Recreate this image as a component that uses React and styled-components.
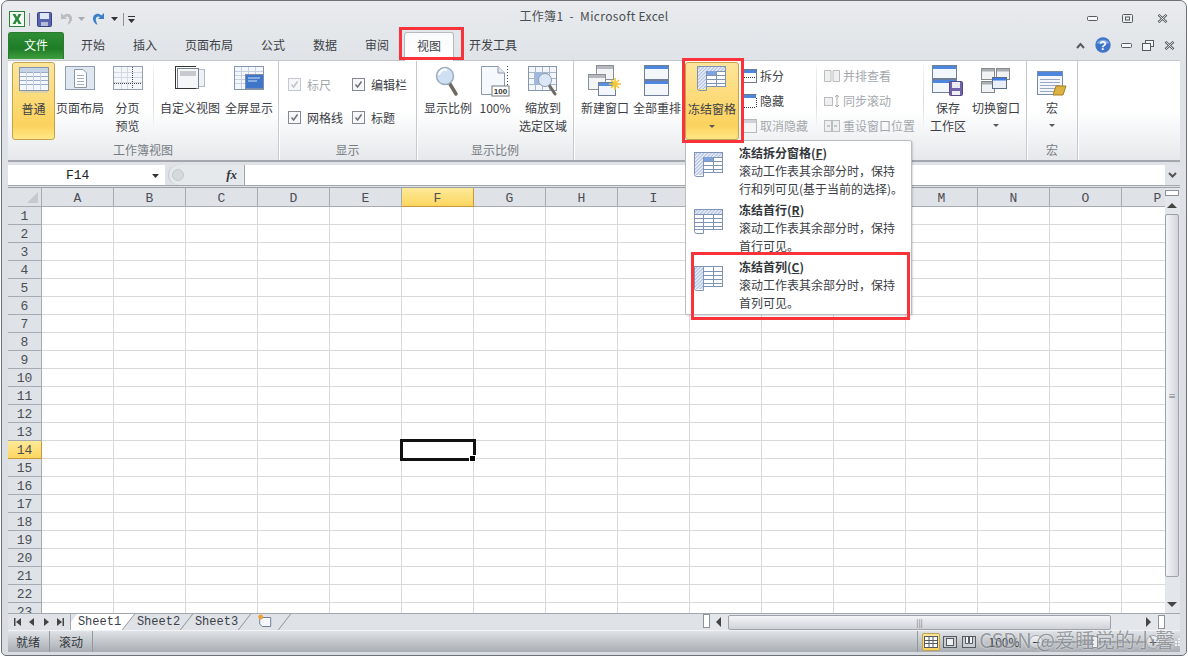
import React from 'react';
import styled, { createGlobalStyle } from 'styled-components';

const GlobalStyle = createGlobalStyle`
    html, body { margin: 0; padding: 0; background: #fff; }
    body { font-family: "Noto Sans CJK SC", "Liberation Sans", sans-serif; font-size: 12px; color: #3c4046; }
`
const Window = styled.div`
    position: relative;
    width: 1186px;
    height: 656px;
    margin-left: 1px;
    box-sizing: border-box;
    display: flex;
    flex-direction: column;
    padding: 0 6px 4px 6px;
    border: 1px solid #6c7278;
    border-radius: 7px 7px 5px 5px;
    background: linear-gradient(#e9ebee 0, #dfe3e7 60px, #d9dde2 100%);
    overflow: hidden;
`
const TitleBar = styled.div`
    height: 31px;
    flex: none;
    display: grid;
    grid-template-columns: 1fr auto 1fr;
    align-items: center;
`
const Qat = styled.div`
    display: flex;
    align-items: center;
    padding: 5px 0 0 1px;
`
const QatGap = styled.span`
    width: ${p => p.$w}px;
    flex: none;
`
const QatSep = styled.span`
    width: 1px;
    height: 13px;
    flex: none;
    background: #8d9298;
`
const TitleText = styled.div`
    font-size: 12px;
    color: #4a4e54;
    white-space: pre;
    letter-spacing: 0.35px;
    margin-top: -3px;
`
const WinControls = styled.div`
    display: flex;
    justify-content: flex-end;
    align-items: center;
    gap: 24px;
    padding: 4px 12px 0 0;
`
const TabRow = styled.div`
    height: 28px;
    flex: none;
    display: flex;
    align-items: flex-start;
`
const FileTab = styled.div`
    width: 56px;
    height: 27px;
    margin-right: 3px;
    border: 1px solid #2c7a2f;
    border-bottom: 0;
    border-radius: 3px 3px 0 0;
    box-sizing: border-box;
    background: linear-gradient(#2f8e35, #1f7c27 60%, #3f9e3f);
    color: #fff;
    text-align: center;
    line-height: 24px;
`
const Tab = styled.div`
    height: 28px;
    box-sizing: border-box;
    padding: 0 14px;
    line-height: 25px;
    color: #3c4046;
    ${p => p.$active && `
        background: linear-gradient(#f9fafb, #ffffff);
        padding: 0 12px;
        margin: 0 1px;
        border: 1px solid #b6babf;
        border-bottom: 0;
        border-radius: 3px 3px 0 0;
        position: relative;
        z-index: 1;
        height: 29px;
    `}
`
const TabRight = styled.div`
    margin-left: auto;
    height: 26px;
    display: flex;
    align-items: center;
    gap: 10px;
    padding: 0 5px 0 0;
`
const Ribbon = styled.div`
    height: 102px;
    flex: none;
    display: flex;
    box-sizing: border-box;
    background: linear-gradient(#ffffff 0, #ffffff 50%, #e6e8eb 100%);
    border-top: 1px solid #c3c7cc;
    border-bottom: 2px solid #a4a8ae;
`
const Group = styled.div`
    width: ${p => p.$w}px;
    flex: none;
    box-sizing: border-box;
    display: flex;
    flex-direction: column;
    border-right: 1px solid #c6cace;
    box-shadow: 1px 0 0 #fff;
`
const GroupBody = styled.div`
    flex: 1;
    display: flex;
    align-items: flex-start;
    gap: ${p => p.$gap || 0}px;
    padding: 1px 0 0 ${p => p.$pad || 0}px;
`
const GroupLabel = styled.div`
    height: 19px;
    flex: none;
    text-align: center;
    line-height: 17px;
    color: #777c83;
`
const LargeButton = styled.div`
    width: ${p => p.$w}px;
    height: 78px;
    flex: none;
    margin-left: ${p => p.$ml || 0}px;
    box-sizing: border-box;
    display: flex;
    flex-direction: column;
    align-items: center;
    text-align: center;
    line-height: 18px;
    white-space: nowrap;
    color: #3c4046;
    ${p => p.$on && `
        border: 1px solid #c2a251;
        border-radius: 3px;
        background: linear-gradient(#fde59a, #fbd25e 82%, #ffe785);
    `}
`
const IconSlot = styled.div`
    height: 37px;
    flex: none;
    padding-top: 3px;
    box-sizing: border-box;
    display: flex;
    justify-content: center;
`
const Caret = styled.span`
    width: 0;
    height: 0;
    margin-top: 7px;
    border: 3px solid transparent;
    border-top: 3px solid #55595f;
    border-bottom: 0;
`
const VSep = styled.span`
    width: 1px;
    height: 62px;
    flex: none;
    margin: ${p => p.$m};
    background: linear-gradient(#f4f5f6, #d7dade 60%, #f4f5f6);
`
const SmallCol = styled.div`
    flex: none;
    display: flex;
    flex-direction: column;
    width: ${p => p.$w}px;
    padding-top: 1px;
`
const SmallRow = styled.div`
    height: 25px;
    display: flex;
    align-items: center;
    gap: 3px;
    white-space: nowrap;
    color: ${p => (p.$dim ? '#a4a8ad' : '#3c4046')};
`
const CheckGrid = styled.div`
    display: grid;
    grid-template-columns: 64px 66px;
    grid-auto-rows: 18px;
    row-gap: 15px;
    padding: 14px 0 0 9px;
`
const CheckItem = styled.div`
    display: flex;
    align-items: center;
    gap: 6px;
    white-space: nowrap;
    color: ${p => (p.$dim ? '#a4a8ad' : '#3c4046')};
`
const CheckBox = styled.span`
    width: 11px;
    height: 11px;
    flex: none;
    border: 1px solid ${p => (p.$dim ? '#c5c8cc' : '#85898f')};
    background: #f6f7f8;
    display: flex;
    align-items: center;
    justify-content: center;
`
const FormulaBar = styled.div`
    height: 20px;
    flex: none;
    margin-top: 3px;
    display: flex;
    background: #dfe3e8;
    border-bottom: 1px solid #a4a8ae;
    box-sizing: content-box;
`
const NameBox = styled.div`
    width: 157px;
    flex: none;
    display: flex;
    align-items: center;
    box-sizing: border-box;
    padding: 1px 6px 0 58px;
    background: #fff;
    font-family: "Liberation Mono", monospace;
    font-size: 13px;
    color: #222;
    justify-content: space-between;
`
const FxZone = styled.div`
    width: 77px;
    flex: none;
    margin-left: 3px;
    position: relative;
    box-sizing: border-box;
    display: flex;
    align-items: center;
    justify-content: flex-end;
    padding-right: 7px;
    background: #e6e9ec;
    border-right: 1px solid #a4a8ae;
    border-left: 1px solid #c3c7cc;
    border-radius: 10px 0 0 10px;
    font-family: "Liberation Serif", serif;
    font-style: italic;
    font-weight: 700;
    font-size: 13px;
    color: #33373c;
`
const FxKnob = styled.span`
    position: absolute;
    left: 3px;
    top: 4px;
    width: 10px;
    height: 10px;
    border-radius: 50%;
    border: 1px solid #c4c8cc;
    background: #d5d8dc;
`
const FormulaInput = styled.div`
    flex: 1;
    background: #fff;
`
const FormulaEnd = styled.div`
    width: 15px;
    flex: none;
    background: #e1e4e8;
    display: flex;
    align-items: center;
    justify-content: center;
`
const SheetArea = styled.div`
    height: 425px;
    flex: none;
    margin-top: 1px;
    display: flex;
    background: #fff;
    border-top: 1px solid #9ca1a7;
`
const CellsClip = styled.div`
    flex: 1;
    overflow: hidden;
`
const CellGrid = styled.div`
    display: grid;
    grid-template-columns: 34px repeat(16, 72px);
    grid-template-rows: 19px;
    grid-auto-rows: 18px;
    width: 1186px;
`
const HeadCell = styled.div`
    box-sizing: border-box;
    display: flex;
    align-items: center;
    justify-content: center;
    padding-top: 2px;
    font-family: "Liberation Mono", monospace;
    font-size: 13px;
    color: #4a4e54;
    background: ${p => (p.$on ? 'linear-gradient(#fde99a, #fdd65f)' : '#dfe2e7')};
    border-right: 1px solid ${p => (p.$on ? '#c9983c' : '#a6abb1')};
    border-bottom: 1px solid ${p => (p.$on ? '#c9983c' : '#a6abb1')};
`
const ColHead = styled(HeadCell)`
    padding-top: 3px;
`
const Corner = styled(HeadCell)`
    align-items: flex-end;
    justify-content: flex-end;
    padding: 0 3px 3px 0;
`
const CornerMark = styled.span`
    width: 0;
    height: 0;
    border-left: 11px solid transparent;
    border-bottom: 11px solid #c6cad0;
`
const Cell = styled.div`
    box-sizing: border-box;
    border-right: 1px solid #d9d9d9;
    border-bottom: 1px solid #d9d9d9;
    position: relative;
    ${p => p.$selected && `
        outline: 3px solid #111;
        outline-offset: -1px;
        z-index: 2;
        &::after {
            content: '';
            position: absolute;
            right: -3px;
            bottom: -4px;
            width: 7px;
            height: 7px;
            background: #000;
            border: 1px solid #fff;
            box-sizing: border-box;
        }
    `}
`
const VScroll = styled.div`
    width: 15px;
    flex: none;
    display: flex;
    flex-direction: column;
    align-items: flex-start;
    background: #e3e6ea;
    box-sizing: border-box;
`
const SplitBox = styled.div`
    width: 14px;
    height: 6px;
    flex: none;
    margin-top: 2px;
    border: 1px solid #8d9298;
    box-sizing: border-box;
    background: #fff;
`
const ArrowUp = styled.span`
    width: 0;
    height: 0;
    flex: none;
    margin: ${p => p.$m};
    border: 5px solid transparent;
    border-top: 0;
    border-bottom: 5px solid #444;
`
const ArrowDown = styled(ArrowUp)`
    border-bottom: 0;
    border-top: 5px solid #444;
`
const VThumb = styled.div`
    width: 14px;
    height: 363px;
    flex: none;
    box-sizing: border-box;
    border: 1px solid #9da2a8;
    border-radius: 2px;
    background: linear-gradient(90deg, #f4f5f7, #d2d6dc);
    display: flex;
    align-items: center;
    justify-content: center;
    color: #6c7076;
    font-size: 8px;
`
const BottomBar = styled.div`
    height: 17px;
    flex: none;
    display: flex;
    background: #dfe3e8;
    border-top: 1px solid #a4a8ae;
    box-sizing: border-box;
`
const NavBox = styled.div`
    width: 63px;
    flex: none;
    display: flex;
    align-items: center;
    justify-content: space-around;
    padding: 0 3px;
    box-sizing: border-box;
    border-right: 1px solid #a4a8ae;
`
const SheetTabs = styled.div`
    display: flex;
    width: 632px;
    flex: none;
    overflow: hidden;
    font-family: "Liberation Mono", monospace;
    font-size: 12px;
`
const SheetTab = styled.div`
    width: ${p => p.$w || 58}px;
    height: 16px;
    flex: none;
    line-height: 16px;
    text-align: center;
    padding-left: ${p => (p.$active ? 0 : 2)}px;
    box-sizing: border-box;
    background: ${p => (p.$active ? '#fff' : 'transparent')};
    color: #3c4046;
    border-right: 1px solid #8d9298;
    transform: skewX(-38deg);
    & > span { display: block; transform: skewX(38deg); }
`
const HThumbZone = styled.div`
    flex: 1;
    display: flex;
    align-items: center;
    background: #e3e6ea;
`
const HThumb = styled.div`
    width: 383px;
    height: 15px;
    flex: none;
    margin-left: 7px;
    box-sizing: border-box;
    border: 1px solid #9da2a8;
    border-radius: 2px;
    background: linear-gradient(#f4f5f7, #cfd3d9);
    display: flex;
    align-items: center;
    justify-content: center;
    font-size: 8px;
    color: #6c7076;
`
const ArrowRight = styled.span`
    width: 0;
    height: 0;
    flex: none;
    margin-left: ${p => p.$ml}px;
    border: 5px solid transparent;
    border-right: 0;
    border-left: 5px solid #444;
`
const ArrowLeft = styled(ArrowRight)`
    border-left: 0;
    border-right: 5px solid #444;
`
const TinySplit = styled.span`
    width: 7px;
    height: 14px;
    margin-left: ${p => p.$ml}px;
    flex: none;
    box-sizing: border-box;
    border: 1px solid #8d9298;
    background: #fff;
`
const StatusBar = styled.div`
    height: 22px;
    flex: none;
    display: flex;
    align-items: center;
    background: linear-gradient(#dfe2e6, #c6cacf 45%, #a9aeb4);
    border-top: 1px solid #f2f3f5;
    box-sizing: border-box;
    color: #33373c;
    position: relative;
`
const StatusCell = styled.div`
    height: 100%;
    padding: 0 9px 0 8px;
    display: flex;
    align-items: center;
    border-right: 1px solid #93989e;
    margin-right: 1px;
`
const StatusRight = styled.div`
    margin-left: auto;
    display: flex;
    align-items: center;
    height: 100%;
    padding-left: 4px;
    border-left: 1px solid #93989e;
`
const ViewBtn = styled.span`
    width: 18px;
    height: 18px;
    margin-right: 1px;
    box-sizing: border-box;
    display: flex;
    align-items: center;
    justify-content: center;
    border-radius: 2px;
    border: 1px solid ${p => (p.$on ? '#c2a251' : 'transparent')};
    background: ${p => (p.$on ? 'linear-gradient(#fde59a, #fbd25e)' : 'transparent')};
`
const ZoomPct = styled.span`
    width: 50px;
    text-align: center;
    font-size: 12px;
`
const ZoomKnob = styled.span`
    width: 14px;
    height: 14px;
    flex: none;
    border-radius: 50%;
    background: linear-gradient(#f3f4f6, #c4c8cd);
    border: 1px solid #a0a4a9;
    box-sizing: border-box;
    display: flex;
    align-items: center;
    justify-content: center;
    font-size: 13px;
    line-height: 12px;
    color: #333;
`
const ZoomRail = styled.span`
    flex: 1;
    height: 2px;
    position: relative;
    background: #9a9ea4;
    &::after {
        content: '';
        position: absolute;
        left: 50%;
        top: -5px;
        width: 6px;
        height: 12px;
        margin-left: -3px;
        background: #eef0f2;
        border: 1px solid #8d9197;
        box-sizing: border-box;
    }
`
const ZoomTrack = styled.div`
    width: 131px;
    flex: none;
    display: flex;
    align-items: center;
    margin-right: 11px;
`
const Grip = styled.svg`
    flex: none;
`
const Watermark = styled.div`
    position: absolute;
    right: 5px;
    bottom: 0;
    font-size: 20px;
    line-height: 24px;
    color: rgba(80, 84, 90, 0.55);
    text-shadow: 0 0 2px rgba(255, 255, 255, 0.8);
    white-space: nowrap;
`
const Menu = styled.div`
    position: absolute;
    left: 683px;
    top: 139px;
    width: 227px;
    height: 175px;
    box-sizing: border-box;
    z-index: 5;
    padding-top: 2px;
    background: #fff;
    border: 1px solid #b9bdc2;
    border-radius: 2px;
    box-shadow: 1px 1px 2px rgba(0, 0, 0, 0.15);
`
const MenuItem = styled.div`
    height: 57px;
    display: flex;
    box-sizing: border-box;
    padding: 1px 0 0 8px;
`
const MenuIcon = styled.div`
    width: 45px;
    padding-top: 8px;
    flex: none;
`
const MenuText = styled.div`
    line-height: 18px;
    color: #3c4046;
    white-space: nowrap;
    & > b { font-weight: 700; color: #33373c; }
    & u { text-underline-offset: 1px; }
`
const RedBox = styled.div`
    position: absolute;
    left: ${p => p.$x}px;
    top: ${p => p.$y}px;
    width: ${p => p.$w}px;
    height: ${p => p.$h}px;
    box-sizing: border-box;
    border: 3px solid #f93339;
    z-index: 6;
    pointer-events: none;
`

/* ---- drawings ---- */
const blue = '#7f93b5';

const SheetIcon = () => (
    <svg width="32" height="27" viewBox="0 0 32 27">
        <rect x="1.5" y="1.5" width="29" height="23" fill="#f3f6fb" stroke="#8595ad" />
        <rect x="2" y="2" width="28" height="4" fill="#c6d2e5" />
        {[6, 10, 14, 18].map(y => <path key={y} d={`M2 ${y + .5}H30`} stroke="#9aabc6" />)}
        {[8, 15, 22].map(x => <path key={x} d={`M${x + .5} 2V24`} stroke="#c4cfe0" />)}
        <path d="M3 26H30" stroke="#c4c8cc" />
    </svg>
);

const PageIcon = () => (
    <svg width="32" height="27" viewBox="0 0 32 27">
        <rect x="1.5" y="1.5" width="29" height="23" fill="#dfe7f1" stroke="#8f9db0" />
        <path d="M10.5 4.5H19L22.5 8V22.5H10.5Z" fill="#fff" stroke="#8a97a8" />
        {[10, 13, 16, 19].map(y => <path key={y} d={`M13 ${y + .5}H20`} stroke="#9fb0c6" />)}
    </svg>
);

const BreakIcon = () => (
    <svg width="32" height="27" viewBox="0 0 32 27">
        <rect x="1.5" y="1.5" width="29" height="23" fill="#f4f6f9" stroke="#95a0af" />
        {[7, 12, 17].map(y => <path key={y} d={`M2 ${y + .5}H30`} stroke="#d3d9e2" />)}
        {[9, 15].map(x => <path key={x} d={`M${x + .5} 2V24`} stroke="#d3d9e2" />)}
        <path d="M20.5 2V24M2 18.5H30" stroke="#444e5e" strokeDasharray="1 1" />
    </svg>
);

const CustomViewIcon = () => (
    <svg width="32" height="27" viewBox="0 0 32 27">
        <rect x="10.5" y="4.5" width="20" height="17" fill="#eef1f5" stroke="#b2b9c3" />
        <rect x="3.5" y="3.5" width="21" height="20" fill="#f5f6f8" stroke="#77818f" />
        <rect x="6" y="6" width="16" height="5" fill="#c6cad0" />
        <path d="M1 1.5H22M1 23.5H22M1.5 1V24" stroke="#333" fill="none" />
    </svg>
);

const FullIcon = () => (
    <svg width="32" height="27" viewBox="0 0 32 27">
        <rect x="1.5" y="1.5" width="29" height="23" fill="#f3f6fb" stroke="#8595ad" />
        {[6, 10, 14, 18].map(y => <path key={y} d={`M2 ${y + .5}H30`} stroke="#c6d0e0" />)}
        {[8, 15, 22].map(x => <path key={x} d={`M${x + .5} 2V24`} stroke="#c6d0e0" />)}
        <rect x="12.5" y="9.5" width="18" height="14" fill="#3f76c9" stroke="#7e8da5" />
        <path d="M15 13H27M15 16H24" stroke="#d5e3f7" />
    </svg>
);

const ZoomIcon = () => (
    <svg width="32" height="32" viewBox="0 0 32 32">
        <path d="M18 19L24 29" stroke="#6e6a60" strokeWidth="3.5" strokeLinecap="round" />
        <circle cx="13" cy="11" r="8.5" fill="#cfe0f2" stroke="#9cadbd" strokeWidth="1.5" />
        <path d="M7 10A6 6 0 0 1 15 5" stroke="#fff" strokeWidth="2" fill="none" />
    </svg>
);

const HundredIcon = () => (
    <svg width="32" height="32" viewBox="0 0 32 32">
        <path d="M2.5 1.5H19L25.5 8V29.5H2.5Z" fill="#f5f8fc" stroke="#8c99aa" />
        <path d="M19 1.5V8H25.5" fill="#dfe6ef" stroke="#8c99aa" />
        <path d="M28.5 1V22" stroke="#444" strokeDasharray="1 2" />
        <rect x="13" y="21" width="17" height="10" fill="#fff" stroke="#70777f" />
        <text x="21.5" y="29" fontSize="8" textAnchor="middle" fontFamily="Liberation Sans" fontWeight="700" fill="#333">100</text>
    </svg>
);

const ZoomSelIcon = () => (
    <svg width="32" height="32" viewBox="0 0 32 32">
        <rect x="1.5" y="1.5" width="28" height="24" fill="#f2f5fa" stroke="#8795a9" />
        <rect x="7" y="7" width="14" height="12" fill="#9db7e6" />
        {[7, 13, 19].map(y => <path key={y} d={`M2 ${y + .5}H29`} stroke="#a9b7ca" />)}
        {[8, 15, 22].map(x => <path key={x} d={`M${x + .5} 2V25`} stroke="#a9b7ca" />)}
        <path d="M22 20L28 29" stroke="#6e6a60" strokeWidth="3" strokeLinecap="round" />
        <circle cx="18" cy="15" r="6.5" fill="#dbe7f6" stroke="#8e9fb1" />
    </svg>
);

const NewWinIcon = () => (
    <svg width="36" height="32" viewBox="0 0 36 32">
        <rect x="9.5" y=".5" width="17" height="14" fill="#f3f4f6" stroke="#8b9097" />
        <rect x="10" y="1" width="16" height="3" fill="#b4b8be" />
        <rect x="1.5" y="9.5" width="17" height="15" fill="#f3f4f6" stroke="#8b9097" />
        <rect x="2" y="10" width="16" height="3" fill="#b4b8be" />
        <rect x="11.5" y="17.5" width="17" height="13" fill="#f3f6fb" stroke="#6f7f97" />
        <rect x="12" y="18" width="16" height="3" fill="#5a8fe0" />
        <path d="M28 13V25M22 19H34M24 15L32 23M32 15L24 23" stroke="#f4c72f" strokeWidth="1.6" />
    </svg>
);

const ArrangeIcon = () => (
    <svg width="26" height="32" viewBox="0 0 26 32">
        <rect x=".5" y=".5" width="24" height="14" fill="#f3f6fb" stroke="#6f7f97" />
        <rect x="1" y="1" width="23" height="3" fill="#4e86dd" />
        <rect x=".5" y="15.5" width="24" height="15" fill="#f3f6fb" stroke="#6f7f97" />
        <rect x="1" y="16" width="23" height="3" fill="#4e86dd" />
    </svg>
);

// the three freeze pictures differ by what is hatched; id varies so menu and ribbon copies don't clash
const FreezeIcon = ({ kind, id }) => (
    <svg width="30" height="26" viewBox="0 0 30 26">
        <defs>
            <pattern id={id} width="2.5" height="2.5" patternUnits="userSpaceOnUse" patternTransform="rotate(45)">
                <rect width="2.5" height="2.5" fill="#e4eaf6" />
                <path d="M0 0V2.5" stroke="#8fa6d6" strokeWidth="1.2" />
            </pattern>
        </defs>
        <rect x=".5" y=".5" width="28" height="20" fill="#fff" stroke={blue} />
        {[5, 9, 13, 17].map(y => <path key={y} d={`M1 ${y + .5}H28`} stroke={blue} />)}
        {[9, 19].map(x => <path key={x} d={`M${x + .5} 1V20`} stroke={blue} />)}
        {kind !== 'col' && <rect x="1" y="1" width="27" height="4" fill={`url(#${id})`} />}
        {kind !== 'row' && <rect x="1" y="1" width="8" height="22" fill={`url(#${id})`} />}
        {kind === 'split' && <rect x="10" y="5" width="9" height="4" fill="#7fa3de" />}
        <path d="M.5 20V22.5Q.5 24.5 3 24.5H9.5V20" fill="none" stroke={blue} />
    </svg>
);

const SaveAreaIcon = () => (
    <svg width="32" height="32" viewBox="0 0 32 32">
        <rect x=".5" y=".5" width="24" height="13" fill="#f3f6fb" stroke="#6f7f97" />
        <rect x="1" y="1" width="23" height="3" fill="#4e86dd" />
        <rect x=".5" y="14.5" width="24" height="13" fill="#f3f6fb" stroke="#6f7f97" />
        <rect x="1" y="15" width="23" height="3" fill="#4e86dd" />
        <rect x="17.5" y="16.5" width="13" height="14" rx="1" fill="#7161a9" stroke="#564a87" />
        <rect x="20" y="17" width="8" height="6" fill="#e9e9ef" />
        <rect x="20" y="26" width="8" height="4" fill="#efeff4" />
    </svg>
);

const SwitchIcon = () => (
    <svg width="30" height="29" viewBox="0 -3 30 29">
        <rect x=".5" y=".5" width="13" height="11" fill="#f1f2f3" stroke="#858a90" />
        <rect x="1" y="1" width="12" height="2.5" fill="#a9adb2" />
        <rect x="15.5" y=".5" width="13" height="11" fill="#f1f2f3" stroke="#858a90" />
        <rect x="16" y="1" width="12" height="2.5" fill="#a9adb2" />
        <rect x=".5" y="13.5" width="13" height="11" fill="#f1f2f3" stroke="#858a90" />
        <rect x="1" y="14" width="12" height="2.5" fill="#a9adb2" />
        <rect x="11.5" y="9.5" width="14" height="11" fill="#e9eff9" stroke="#5a6c88" />
        <rect x="12" y="10" width="13" height="2.5" fill="#3f7be0" />
    </svg>
);

const MacroIcon = () => (
    <svg width="30" height="31" viewBox="0 -4 30 31">
        <rect x=".5" y="2.5" width="25" height="23" fill="#f3f6fb" stroke="#7a8ba6" />
        <rect x="1" y="3" width="24" height="4" fill="#4e86dd" />
        {[10, 13, 16, 19, 22].map(y => <path key={y} d={`M3 ${y + .5}H23`} stroke="#9aa9c0" />)}
        <path d="M19 17H29L26 26H16Z" fill="#dcb341" stroke="#a47f24" />
    </svg>
);

const SplitSmall = () => (
    <svg width="14" height="14" viewBox="0 0 14 14">
        <rect x=".5" y=".5" width="13" height="13" fill="#fff" stroke="#6c7a90" />
        <rect x="1" y="1" width="12" height="3" fill="#4e86dd" />
        <path d="M1 8.5H13" stroke="#333" strokeDasharray="1 1" />
    </svg>
);
const HideSmall = () => (
    <svg width="14" height="14" viewBox="0 0 14 14">
        <path d="M.5 13V.5H13.5" fill="#fff" stroke="#6c7a90" />
        <rect x="1" y="1" width="12" height="3" fill="#4e86dd" />
        <path d="M1 13.5H13M13.5 4V13" stroke="#333" strokeDasharray="1 1" />
    </svg>
);
const UnhideSmall = () => (
    <svg width="14" height="14" viewBox="0 0 14 14">
        <rect x=".5" y=".5" width="13" height="13" fill="#f6f6f6" stroke="#b5b8bc" />
        <rect x="1" y="1" width="12" height="3" fill="#cfd2d6" />
    </svg>
);
const BookSmall = () => (
    <svg width="16" height="14" viewBox="0 0 16 14">
        <path d="M.5 1.5H7V12.5H.5ZM9 1.5H15.5V12.5H9Z" fill="#efefef" stroke="#b9bcc0" />
    </svg>
);
const SyncSmall = () => (
    <svg width="16" height="14" viewBox="0 0 16 14">
        <rect x=".5" y="3.5" width="8" height="8" fill="#efefef" stroke="#b9bcc0" />
        <path d="M13 1V13M11 3L13 1L15 3M11 11L13 13L15 11" stroke="#a8abaf" fill="none" />
    </svg>
);
const ResetSmall = () => (
    <svg width="16" height="14" viewBox="0 0 16 14">
        <rect x=".5" y="1.5" width="7" height="11" fill="#efefef" stroke="#b9bcc0" />
        <rect x="8.5" y="1.5" width="7" height="11" fill="#efefef" stroke="#b9bcc0" />
        <path d="M3 7H6M10 7H13" stroke="#9a9da1" />
    </svg>
);

const ExcelLogo = () => (
    <svg width="16" height="16" viewBox="0 0 16 16">
        <rect x=".5" y=".5" width="15" height="15" fill="#f4f8f2" stroke="#2f7f3a" />
        <path d="M3.5 3H6.5L8 6L9.5 3H12.5L9.6 8L12.5 13H9.5L8 10L6.5 13H3.5L6.4 8Z" fill="#2b8a3b" />
    </svg>
);
const SaveIcon = () => (
    <svg width="15" height="15" viewBox="0 0 15 15">
        <rect x=".5" y=".5" width="14" height="14" rx="1" fill="#5a63ad" stroke="#3b4280" />
        <rect x="3" y="1" width="9" height="6" fill="#dfe6f4" />
        <rect x="4" y="10" width="7" height="4" fill="#b6bbd8" />
    </svg>
);
const UndoIcon = ({ color }) => (
    <svg width="13" height="14" viewBox="0 0 13 14">
        <path d="M1 1V7H7L5 5C7 3.5 10 5 9 9L7.5 13C12 11 13.5 6 10.5 3C8.5 1.2 5.5 1.5 3.6 3.4Z" fill={color} />
    </svg>
);
const RedoIcon = ({ color }) => (
    <svg width="13" height="14" viewBox="0 0 13 14" style={{ transform: 'scaleX(-1)' }}>
        <path d="M1 1V7H7L5 5C7 3.5 10 5 9 9L7.5 13C12 11 13.5 6 10.5 3C8.5 1.2 5.5 1.5 3.6 3.4Z" fill={color} />
    </svg>
);
const TinyCaret = ({ color = '#333' }) => (
    <svg width="7" height="4" viewBox="0 0 7 4"><path d="M0 0H7L3.5 4Z" fill={color} /></svg>
);
const CustomizeIcon = () => (
    <svg width="7" height="7" viewBox="0 0 7 7"><path d="M0 .5H7" stroke="#333" /><path d="M0 3H7L3.5 7Z" fill="#333" /></svg>
);
const MinIcon = () => (
    <svg width="11" height="5" viewBox="0 0 11 5">
        <rect x=".5" y=".5" width="10" height="4" rx="1" fill="#f6f7f8" stroke="#555b62" />
    </svg>
);
const MaxIcon = () => (
    <svg width="11" height="9" viewBox="0 0 11 9">
        <rect x=".5" y=".5" width="10" height="8" rx="1" fill="#eceef0" stroke="#555b62" />
        <rect x="3.5" y="3" width="4" height="3" fill="none" stroke="#555b62" />
    </svg>
);
const CloseIcon = () => (
    <svg width="11" height="9" viewBox="0 0 11 9">
        <path d="M1.5 .8L9.5 8.2M9.5 .8L1.5 8.2" stroke="#555b62" strokeWidth="2.4" />
        <path d="M2 1.2L9 7.8M9 1.2L2 7.8" stroke="#f4f5f6" strokeWidth=".9" />
    </svg>
);
const RestoreIcon = () => (
    <svg width="12" height="11" viewBox="0 0 12 11">
        <rect x="3.5" y=".5" width="8" height="6" fill="#f4f5f6" stroke="#555b62" />
        <rect x=".5" y="3.5" width="8" height="7" fill="#f4f5f6" stroke="#555b62" />
    </svg>
);
const HelpIcon = () => (
    <svg width="16" height="16" viewBox="0 0 16 16">
        <circle cx="8" cy="8" r="7.7" fill="#3f74c6" />
        <path d="M1.5 6.5A7 6 0 0 1 14.5 6.5Z" fill="#7ea7e2" />
        <text x="8" y="12.5" fontSize="12" fontWeight="700" textAnchor="middle" fontFamily="Liberation Sans" fill="#fff">?</text>
    </svg>
);
const CollapseIcon = () => (
    <svg width="9" height="7" viewBox="0 0 9 7">
        <path d="M1 6L4.5 2L8 6" stroke="#555b62" strokeWidth="2" fill="none" />
    </svg>
);
const Checkmark = ({ dim }) => (
    <svg width="9" height="9" viewBox="0 0 9 9">
        <path d="M1.5 4.5L3.6 7L7.5 1.5" stroke={dim ? '#c0c3c7' : '#6d7177'} strokeWidth="1.5" fill="none" />
    </svg>
);
const NavIcon = ({ d }) => <svg width="8" height="8" viewBox="0 0 8 8"><path d={d} fill="#444" /></svg>;
const NewSheetIcon = () => (
    <svg width="15" height="13" viewBox="0 0 15 13">
        <path d="M2.5 3.5H13.5V12.5H5L2.5 10Z" fill="#f4f7fb" stroke="#6f7f97" />
        <circle cx="3.5" cy="3" r="2.5" fill="#e8a33a" />
    </svg>
);
const NormalIcon = () => (
    <svg width="14" height="12" viewBox="0 0 14 12">
        <rect x=".5" y=".5" width="13" height="11" fill="#fff" stroke="#555b62" />
        <path d="M1 4.5H13M1 7.5H13M5 1V11M9 1V11" stroke="#555b62" />
    </svg>
);
const LayoutIcon = () => (
    <svg width="14" height="12" viewBox="0 0 14 12">
        <rect x=".5" y=".5" width="13" height="11" fill="#c9ccd0" stroke="#555b62" />
        <rect x="3.5" y="2.5" width="7" height="7" fill="#eef0f2" stroke="#555b62" />
    </svg>
);
const PageBreakIcon = () => (
    <svg width="14" height="12" viewBox="0 0 14 12">
        <rect x=".5" y=".5" width="13" height="11" fill="#c9ccd0" stroke="#555b62" />
        <path d="M3.5 1V7.5H6.5V1M7.5 1V7.5H10.5V1" fill="#f4f5f6" stroke="#555b62" />
    </svg>
);

const tabs = ['开始', '插入', '页面布局', '公式', '数据', '审阅', '视图', '开发工具'];
const columns = 'ABCDEFGHIJKLMNOP'.split('');
const rows = Array.from({ length: 23 }, (_, i) => i + 1);
const sheets = ['Sheet1', 'Sheet2', 'Sheet3'];

const freezeItems = [
    { kind: 'split', title: '冻结拆分窗格', key: 'F', lines: ['滚动工作表其余部分时，保持', '行和列可见(基于当前的选择)。'] },
    { kind: 'row', title: '冻结首行', key: 'R', lines: ['滚动工作表其余部分时，保持', '首行可见。'] },
    { kind: 'col', title: '冻结首列', key: 'C', lines: ['滚动工作表其余部分时，保持', '首列可见。'] },
];

const Big = ({ w, ml, on, icon, lines, caret }) => (
    <LargeButton $w={w} $ml={ml} $on={on}>
        <IconSlot>{icon}</IconSlot>
        {lines.map(l => <span key={l}>{l}</span>)}
        {caret && <Caret />}
    </LargeButton>
);

const Check = ({ label, dim }) => (
    <CheckItem $dim={dim}>
        <CheckBox $dim={dim}><Checkmark dim={dim} /></CheckBox>
        {label}
    </CheckItem>
);

const App = () => {
    return (
        <Window>
            <GlobalStyle />
            <TitleBar>
                <Qat>
                    <ExcelLogo />
                    <QatGap $w={4} />
                    <QatSep />
                    <QatGap $w={7} />
                    <SaveIcon />
                    <QatGap $w={8} />
                    <UndoIcon color="#b9bcc1" />
                    <QatGap $w={5} />
                    <TinyCaret color="#a9acb0" />
                    <QatGap $w={7} />
                    <RedoIcon color="#3b7fc9" />
                    <QatGap $w={6} />
                    <TinyCaret />
                    <QatGap $w={5} />
                    <QatSep />
                    <QatGap $w={4} />
                    <CustomizeIcon />
                </Qat>
                <TitleText>工作簿1  -  Microsoft Excel</TitleText>
                <WinControls>
                    <MinIcon />
                    <MaxIcon />
                    <CloseIcon />
                </WinControls>
            </TitleBar>
            <TabRow>
                <FileTab>文件</FileTab>
                {tabs.map(t => <Tab key={t} $active={t === '视图'}>{t}</Tab>)}
                <TabRight>
                    <CollapseIcon />
                    <HelpIcon />
                    <MinIcon />
                    <RestoreIcon />
                    <CloseIcon />
                </TabRight>
            </TabRow>
            <Ribbon>
                <Group $w={271}>
                    <GroupBody $pad={4} $gap={1}>
                        <Big w={43} on icon={<SheetIcon />} lines={['普通']} />
                        <Big w={48} icon={<PageIcon />} lines={['页面布局']} />
                        <Big w={45} icon={<BreakIcon />} lines={['分页', '预览']} />
                        <VSep $m="3px 5px 0 2px" />
                        <Big w={60} icon={<CustomViewIcon />} lines={['自定义视图']} />
                        <Big w={56} icon={<FullIcon />} lines={['全屏显示']} />
                    </GroupBody>
                    <GroupLabel>工作簿视图</GroupLabel>
                </Group>
                <Group $w={138}>
                    <CheckGrid>
                        <Check label="标尺" dim />
                        <Check label="编辑栏" />
                        <Check label="网格线" />
                        <Check label="标题" />
                    </CheckGrid>
                    <GroupBody />
                    <GroupLabel>显示</GroupLabel>
                </Group>
                <Group $w={157}>
                    <GroupBody $pad={7} $gap={3}>
                        <Big w={48} icon={<ZoomIcon />} lines={['显示比例']} />
                        <Big w={40} icon={<HundredIcon />} lines={['100%']} />
                        <Big w={50} icon={<ZoomSelIcon />} lines={['缩放到', '选定区域']} />
                    </GroupBody>
                    <GroupLabel>显示比例</GroupLabel>
                </Group>
                <Group $w={453}>
                    <GroupBody $pad={7} $gap={4}>
                        <Big w={48} icon={<NewWinIcon />} lines={['新建窗口']} />
                        <Big w={48} icon={<ArrangeIcon />} lines={['全部重排']} />
                        <Big w={54} on icon={<FreezeIcon kind="split" id="hatch-ribbon" />} lines={['冻结窗格']} caret />
                        <SmallCol $w={67}>
                            <SmallRow><SplitSmall />拆分</SmallRow>
                            <SmallRow><HideSmall />隐藏</SmallRow>
                            <SmallRow $dim><UnhideSmall />取消隐藏</SmallRow>
                        </SmallCol>
                        <VSep $m="3px 3px 0 2px" />
                        <SmallCol $w={92}>
                            <SmallRow $dim><BookSmall />并排查看</SmallRow>
                            <SmallRow $dim><SyncSmall />同步滚动</SmallRow>
                            <SmallRow $dim><ResetSmall />重设窗口位置</SmallRow>
                        </SmallCol>
                        <VSep $m="3px 2px 0 3px" />
                        <Big w={36} icon={<SaveAreaIcon />} lines={['保存', '工作区']} />
                        <Big w={48} ml={2} icon={<SwitchIcon />} lines={['切换窗口']} caret />
                    </GroupBody>
                    <GroupLabel>窗口</GroupLabel>
                </Group>
                <Group $w={51}>
                    <GroupBody $pad={1}>
                        <Big w={48} icon={<MacroIcon />} lines={['宏']} caret />
                    </GroupBody>
                    <GroupLabel>宏</GroupLabel>
                </Group>
            </Ribbon>
            <FormulaBar>
                <NameBox>F14<TinyCaret /></NameBox>
                <FxZone><FxKnob />fx</FxZone>
                <FormulaInput />
                <FormulaEnd><svg width="9" height="6" viewBox="0 0 9 6"><path d="M1 1L4.5 4.5L8 1" stroke="#555" strokeWidth="2" fill="none" /></svg></FormulaEnd>
            </FormulaBar>
            <SheetArea>
                <CellsClip>
                    <CellGrid>
                        <Corner><CornerMark /></Corner>
                        {columns.map(c => <ColHead key={c} $on={c === 'F'}>{c}</ColHead>)}
                        {rows.map(r => (
                            <React.Fragment key={r}>
                                <HeadCell $on={r === 14}>{r}</HeadCell>
                                {columns.map(c => <Cell key={c} $selected={r === 14 && c === 'F'} />)}
                            </React.Fragment>
                        ))}
                    </CellGrid>
                </CellsClip>
                <VScroll>
                    <SplitBox />
                    <ArrowUp $m="7px 0 6px 2px" />
                    <VThumb>≡</VThumb>
                    <ArrowDown $m="25px 0 0 2px" />
                </VScroll>
            </SheetArea>
            <BottomBar>
                <NavBox>
                    <NavIcon d="M0 0H1.5V8H0ZM7 0V8L2 4Z" />
                    <NavIcon d="M6 0V8L1 4Z" />
                    <NavIcon d="M2 0V8L7 4Z" />
                    <NavIcon d="M1 0V8L6 4ZM6.5 0H8V8H6.5Z" />
                </NavBox>
                <SheetTabs>
                    {sheets.map((s, i) => <SheetTab key={s} $active={i === 0}><span>{s}</span></SheetTab>)}
                    <SheetTab $w={40}><span><NewSheetIcon /></span></SheetTab>
                </SheetTabs>
                <TinySplit $ml={0} />
                <HThumbZone>
                    <ArrowLeft $ml={6} />
                    <HThumb>|||</HThumb>
                    <ArrowRight $ml={35} />
                    <TinySplit $ml={7} />
                </HThumbZone>
            </BottomBar>
            <StatusBar>
                <StatusCell>就绪</StatusCell>
                <StatusCell>滚动</StatusCell>
                <StatusRight>
                    <ViewBtn $on><NormalIcon /></ViewBtn>
                    <ViewBtn><LayoutIcon /></ViewBtn>
                    <ViewBtn><PageBreakIcon /></ViewBtn>
                    <ZoomPct>100%</ZoomPct>
                    <ZoomTrack>
                        <ZoomKnob>−</ZoomKnob>
                        <ZoomRail />
                        <ZoomKnob>+</ZoomKnob>
                    </ZoomTrack>
                    <Grip width="9" height="9" viewBox="0 0 9 9">
                        <path d="M7 1h2v2H7zM4 4h2v2H4zM7 4h2v2H7zM1 7h2v2H1zM4 7h2v2H4zM7 7h2v2H7z" fill="#eef0f2" />
                    </Grip>
                </StatusRight>
                <Watermark>CSDN @爱睡觉的小馨</Watermark>
            </StatusBar>
            <Menu>
                {freezeItems.map(item => (
                    <MenuItem key={item.kind}>
                        <MenuIcon><FreezeIcon kind={item.kind} id={`hatch-${item.kind}`} /></MenuIcon>
                        <MenuText>
                            <b>{item.title}(<u>{item.key}</u>)</b>
                            {item.lines.map(l => <div key={l}>{l}</div>)}
                        </MenuText>
                    </MenuItem>
                ))}
            </Menu>
            <RedBox $x={397} $y={26} $w={65} $h={33} />
            <RedBox $x={680} $y={57} $w={62} $h={85} />
            <RedBox $x={689} $y={251} $w={219} $h={68} />
        </Window>
    );
};

export default App;
